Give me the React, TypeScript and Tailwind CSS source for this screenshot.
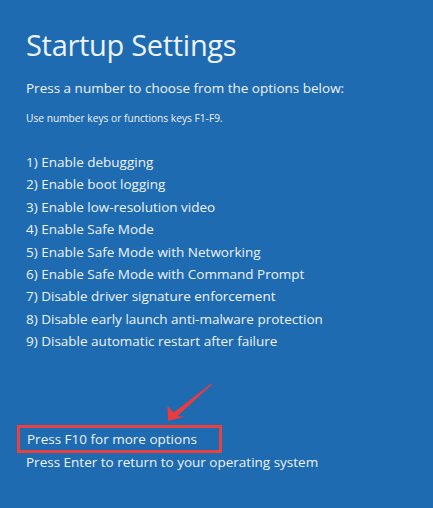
const options = [
  '1) Enable debugging',
  '2) Enable boot logging',
  '3) Enable low-resolution video',
  '4) Enable Safe Mode',
  '5) Enable Safe Mode with Networking',
  '6) Enable Safe Mode with Command Prompt',
  '7) Disable driver signature enforcement',
  '8) Disable early launch anti-malware protection',
  '9) Disable automatic restart after failure',
];

export default function App() {
  return (
    <div
      className="relative w-[433px] h-[508px] overflow-hidden bg-[#1e6bb1] text-[#eef3fa] pl-[26px]"
      style={{ fontFamily: '"Open Sans", "Noto Sans", sans-serif' }}
    >
      <div className="pt-[25px] text-[29px] leading-[40px] tracking-[-0.3px]">Startup Settings</div>
      <div className="mt-[12px] text-[13.5px] leading-[22px]">Press a number to choose from the options below:</div>
      <div className="mt-[11px] text-[10.2px] leading-[16px]">Use number keys or functions keys F1-F9.</div>

      <div className="mt-[25px] flex flex-col">
        {options.map((o) => (
          <div key={o} className="text-[13.5px] leading-[22.4px]">
            {o}
          </div>
        ))}
      </div>

      <div className="mt-[72px] ml-[-9px] w-[205px] h-[28px] border-[3px] border-[#e8413f] pl-[7px] flex items-center text-[13.5px]">
        Press F10 for more options
      </div>
      <div className="mt-[-2px] text-[13.5px] leading-[22px]">Press Enter to return to your operating system</div>

      {/* annotation arrow */}
      <svg className="absolute inset-0" width="433" height="508" viewBox="0 0 433 508">
        <polygon
          points="168,421 185,416.5 177.2,416.3 212.1,384.3 211.3,383.4 173.8,412.5 167.5,406"
          fill="#ee3a3c"
        />
      </svg>
    </div>
  );
}
